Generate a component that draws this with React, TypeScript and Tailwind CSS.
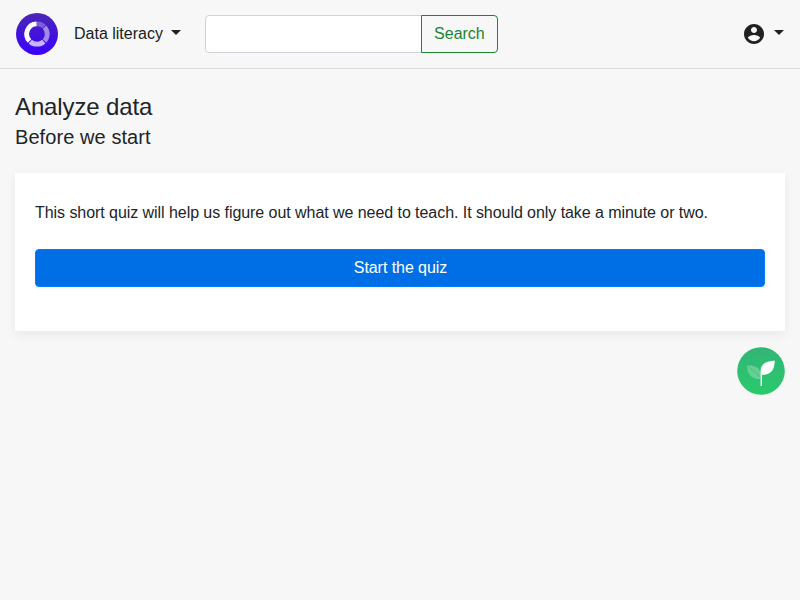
function Caret() {
  return (
    <span className="inline-block h-0 w-0 border-x-[5px] border-t-[5px] border-x-transparent border-t-[#212121]" />
  );
}

function Logo() {
  return (
    <svg width="42" height="42" viewBox="0 0 42 42" className="block">
      <defs>
        <linearGradient id="logo" x1="0" y1="0" x2="0" y2="1">
          <stop offset="0" stopColor="#4b27b5" />
          <stop offset="1" stopColor="#3a00ff" />
        </linearGradient>
      </defs>
      <circle cx="21" cy="21" r="21" fill="url(#logo)" />
      <g fill="none" stroke="#fff" strokeWidth="4.8">
        <path d="M20.6 10.8A10.2 10.2 0 0 0 13.5 28" />
        <path d="M14.2 28.6A10.2 10.2 0 0 0 27.8 28.6" opacity=".7" />
        <path d="M28.5 28A10.2 10.2 0 0 0 28.5 14.1" opacity=".5" />
        <path d="M28.1 13.6A10.2 10.2 0 0 0 20.9 10.8" opacity=".3" />
      </g>
    </svg>
  );
}

function Sprout() {
  return (
    <svg width="48" height="48" viewBox="0 0 48 48" className="block">
      <defs>
        <linearGradient id="sprout" x1="0" y1="0" x2="0" y2="1">
          <stop offset="0" stopColor="#32b576" />
          <stop offset="1" stopColor="#2aca6c" />
        </linearGradient>
      </defs>
      <circle cx="24" cy="24" r="23.8" fill="url(#sprout)" />
      <path d="M10.2 18.6C17 17.8 22.5 20.5 23.6 25.8V32C15.5 33 9.8 28 10.2 18.6Z" fill="#fff" opacity=".26" />
      <path d="M12.5 20.5L23.5 30.2" stroke="#2fbb70" strokeWidth=".9" strokeDasharray="1.4 .6" fill="none" />
      <path d="M37.8 13.8C30 13.8 24.2 16.8 23.6 23V39H25V27.7C33.5 28.4 37.7 23 37.8 13.8Z" fill="#fff" />
    </svg>
  );
}

export default function App() {
  return (
    <div className="min-h-screen bg-[#f7f7f7] font-['Liberation_Sans',Arial,sans-serif] text-base text-[#212529]">
      <header className="flex h-[69px] items-center border-b border-[#d9dadc] px-4">
        <Logo />
        <button className="ml-4 flex items-center gap-2 text-[#212121]">
          Data literacy
          <span className="-mt-[3px] flex"><Caret /></span>
        </button>
        <form className="ml-6 flex h-[38px]">
          <input aria-label="Search" className="w-[217px] rounded-l border border-[#ced4da] bg-white px-3 outline-none" />
          <button type="button" className="-ml-px w-[77px] rounded-r border border-[#198630] text-[#198630]">
            Search
          </button>
        </form>
        <button aria-label="Account" className="ml-auto flex items-center gap-2">
          <svg width="24" height="24" viewBox="0 0 24 24" fill="#212121">
            <path d="M12 2C6.48 2 2 6.48 2 12s4.48 10 10 10 10-4.48 10-10S17.52 2 12 2zm0 3c1.66 0 3 1.34 3 3s-1.34 3-3 3-3-1.34-3-3 1.34-3 3-3zm0 14.2c-2.5 0-4.71-1.28-6-3.22.03-1.99 4-3.08 6-3.08 1.99 0 5.97 1.09 6 3.08-1.29 1.94-3.5 3.22-6 3.22z" />
          </svg>
          <span className="-mt-[3px] flex"><Caret /></span>
        </button>
      </header>
      <main className="px-[15px] pt-6">
        <h1 className="text-2xl leading-[28.8px] tracking-[-0.12px]">Analyze data</h1>
        <h2 className="mt-[3px] text-xl leading-6 tracking-[0.08px]">Before we start</h2>
        <section className="mt-6 h-[158px] bg-white px-5 pt-7 shadow-[0_4px_10px_rgba(0,0,0,0.06)]">
          <p className="leading-6 tracking-[-0.057px]">
            This short quiz will help us figure out what we need to teach. It should only take a minute or two.
          </p>
          <button className="mt-6 h-[38px] w-full rounded border border-[#007bff] bg-[#006fe6] pl-px tracking-[-0.06px] text-white">
            Start the quiz
          </button>
        </section>
        <div className="mt-4 flex justify-end">
          <Sprout />
        </div>
      </main>
    </div>
  );
}
